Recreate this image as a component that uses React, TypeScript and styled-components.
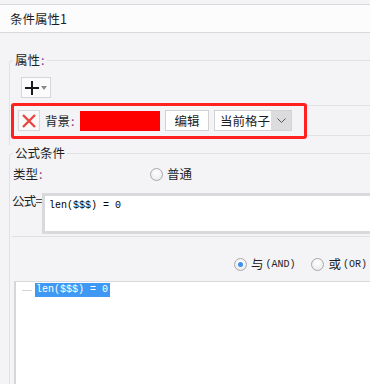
import styled, { createGlobalStyle } from "styled-components";

const GlobalStyle = createGlobalStyle`
    html, body {
        margin: 0;
        padding: 0;
        overflow: hidden;
        background: #f4f4f6;
    }
    body {
        font-family: "Noto Sans CJK SC", "Liberation Sans", sans-serif;
        font-size: 12px;
        color: #1e1e1e;
    }
`;

function App() {
    return (
        <Page>
            <GlobalStyle />
            <TitleBar>条件属性1</TitleBar>
            <Body>
                <Group $top={19}>
                    <Legend>
                        属性<Colon>:</Colon>
                    </Legend>
                    <AddButton>
                        <svg width="14" height="14" viewBox="0 0 14 14">
                            <path d="M7 0v14M0 7h14" stroke="#1a1a1a" strokeWidth="2" />
                        </svg>
                        <svg width="6" height="4" viewBox="0 0 6 4">
                            <path d="M0 0h6L3 4z" fill="#8a8a8a" />
                        </svg>
                    </AddButton>
                    <ItemRow>
                        <Highlight>
                            <RemoveButton>
                                <svg width="16" height="16" viewBox="0 0 16 16">
                                    <path
                                        d="M2 2L14 14M14 2L2 14"
                                        stroke="#e8473f"
                                        strokeWidth="2.4"
                                    />
                                </svg>
                            </RemoveButton>
                            <FieldLabel>
                                背景<Colon>:</Colon>
                            </FieldLabel>
                            <ColorSwatch $color="#ff0000" />
                            <PlainButton>编辑</PlainButton>
                            <Select>
                                <SelectText>当前格子</SelectText>
                                <SelectArrow>
                                    <svg width="9" height="5" viewBox="0 0 9 5">
                                        <path
                                            d="M0.5 0.5L4.5 4.5L8.5 0.5"
                                            fill="none"
                                            stroke="#555"
                                            strokeWidth="1"
                                        />
                                    </svg>
                                </SelectArrow>
                            </Select>
                        </Highlight>
                    </ItemRow>
                </Group>
                <Group $top={0}>
                    <Legend>公式条件</Legend>
                    <TypeRow>
                        <RowLabel>
                            类型<Colon>:</Colon>
                        </RowLabel>
                        <Radio $checked={false} />
                        <RadioText>普通</RadioText>
                    </TypeRow>
                    <FormulaRow>
                        <FormulaLabel>公式=</FormulaLabel>
                        <FormulaBox>len($$$) = 0</FormulaBox>
                    </FormulaRow>
                    <Divider />
                    <LogicRow>
                        <LogicOption>
                            <Radio $checked={true} />
                            <RadioText>与</RadioText>
                            <Ascii>(AND)</Ascii>
                        </LogicOption>
                        <LogicOption>
                            <Radio $checked={false} />
                            <RadioText>或</RadioText>
                            <Ascii>(OR)</Ascii>
                        </LogicOption>
                    </LogicRow>
                    <TreePanel>
                        <TreeItem>
                            <TreeDash />
                            <TreeText>len($$$) = 0</TreeText>
                        </TreeItem>
                    </TreePanel>
                </Group>
            </Body>
        </Page>
    );
}

export default App;

const Page = styled.div`
    padding-top: 4px;
`;

const TitleBar = styled.div`
    height: 27px;
    display: flex;
    align-items: center;
    padding-left: 10px;
    background: #fcfcfc;
    border-top: 1px solid #d9d9db;
    border-bottom: 1px solid #d9d9db;
    font-size: 12.5px;
`;

const Body = styled.div`
    padding-left: 9px;
`;

const Group = styled.fieldset<{ $top: number }>`
    margin: ${(p) => p.$top}px 0 0 0;
    padding: 0 0 9px 0;
    min-width: 0;
    border: none;
    border-top: 1px solid #e1e1e3;
    border-left: 1px solid #e1e1e3;
    border-top-left-radius: 4px;
`;

const Legend = styled.legend`
    margin-left: 3px;
    padding: 0 2px;
    font-size: 12.5px;
    line-height: 16px;
`;

const Colon = styled.span`
    color: #7a3a8a;
    margin-left: 1px;
`;

const AddButton = styled.div`
    margin: 9px 0 0 11px;
    height: 19px;
    width: 25px;
    display: flex;
    align-items: center;
    padding-left: 3px;
    gap: 2px;
    box-sizing: content-box;
    background: #fbfbfb;
    border: 1px solid #d6d6d8;
`;

const ItemRow = styled.div`
    margin-top: 7px;
    height: 29px;
    display: flex;
    align-items: center;
    border-top: 1px solid #e2e2e4;
    border-bottom: 1px solid #e2e2e4;
`;

const Highlight = styled.div`
    margin-left: 1px;
    width: 296px;
    height: 36px;
    box-sizing: border-box;
    display: flex;
    align-items: center;
    gap: 5px;
    padding-left: 4px;
    border: 3px solid #ff2020;
    border-radius: 3px;
    background: #f4f4f6;
    font-size: 12.5px;
`;

const RemoveButton = styled.div`
    width: 20px;
    height: 19px;
    display: flex;
    align-items: center;
    justify-content: center;
    background: #f9f9f9;
    border: 1px solid #d8d8da;
`;

const FieldLabel = styled.span`
    width: 30px;
    line-height: 16px;
    white-space: nowrap;
`;

const ColorSwatch = styled.div<{ $color: string }>`
    width: 80px;
    height: 20px;
    background: ${(p) => p.$color};
`;

const PlainButton = styled.div`
    width: 42px;
    height: 19px;
    display: flex;
    align-items: center;
    justify-content: center;
    background: #fff;
    border: 1px solid #d2d2d4;
`;

const Select = styled.div`
    width: 76px;
    height: 19px;
    display: flex;
    background: #fff;
    border: 1px solid #d2d2d4;
`;

const SelectText = styled.span`
    flex: 1;
    padding-left: 5px;
    line-height: 19px;
    white-space: nowrap;
`;

const SelectArrow = styled.span`
    width: 20px;
    display: flex;
    align-items: center;
    justify-content: center;
    background: #dcdcde;
`;

const TypeRow = styled.div`
    margin: 3px 0 0 3px;
    height: 20px;
    display: flex;
    align-items: center;
    font-size: 12.5px;
`;

const RowLabel = styled.span`
    width: 137px;
    line-height: 16px;
`;

const Radio = styled.span<{ $checked: boolean }>`
    flex-shrink: 0;
    width: 11px;
    height: 11px;
    border-radius: 50%;
    border: 1px solid #a9a9ab;
    background: radial-gradient(circle at 50% 35%, #ffffff 0%, #e6e6e8 100%);
    display: flex;
    align-items: center;
    justify-content: center;

    &::after {
        content: "";
        width: 5px;
        height: 5px;
        border-radius: 50%;
        background: #3d8ef2;
        display: ${(p) => (p.$checked ? "block" : "none")};
    }
`;

const RadioText = styled.span`
    margin-left: 4px;
    line-height: 16px;
    font-size: 12.5px;
`;

const FormulaRow = styled.div`
    margin: 9px 0 0 2px;
    display: flex;
    align-items: flex-start;
`;

const FormulaLabel = styled.span`
    flex-shrink: 0;
    width: 30px;
    line-height: 16px;
    white-space: nowrap;
    font-size: 12.5px;
    letter-spacing: -0.8px;
`;

const FormulaBox = styled.div`
    flex: 1;
    height: 32px;
    padding: 3px 4px 0;
    background: #fff;
    border: 3px solid #d9d9db;
    border-right: none;
    font-family: "Liberation Mono", monospace;
    font-size: 10px;
    line-height: 14px;
    white-space: pre;
    color: #000;
`;

const Divider = styled.div`
    margin: 2px 0 0 2px;
    border-top: 1px solid #e0e0e2;
`;

const LogicRow = styled.div`
    margin-top: 17px;
    height: 20px;
    display: flex;
    align-items: center;
    justify-content: flex-end;
    gap: 16px;
    padding-right: 3px;
`;

const LogicOption = styled.div`
    display: flex;
    align-items: center;
`;

const Ascii = styled.span`
    margin-left: 2px;
    font-family: "Liberation Mono", monospace;
    font-size: 10px;
    color: #222;
`;

const TreePanel = styled.div`
    margin: 7px 0 0 4px;
    height: 110px;
    padding-top: 1px;
    background: #fff;
    border-top: 1px solid #dadadc;
    border-left: 2px solid #d6d6d8;
`;

const TreeItem = styled.div`
    display: flex;
    align-items: center;
    padding-left: 6px;
    gap: 3px;
`;

const TreeDash = styled.span`
    width: 10px;
    border-top: 1px solid #d4d4d6;
`;

const TreeText = styled.span`
    padding: 0 2px 0 1px;
    height: 14px;
    background: #3f98f3;
    color: #fff;
    font-family: "Liberation Mono", monospace;
    font-size: 10px;
    line-height: 14px;
    white-space: pre;
`;
